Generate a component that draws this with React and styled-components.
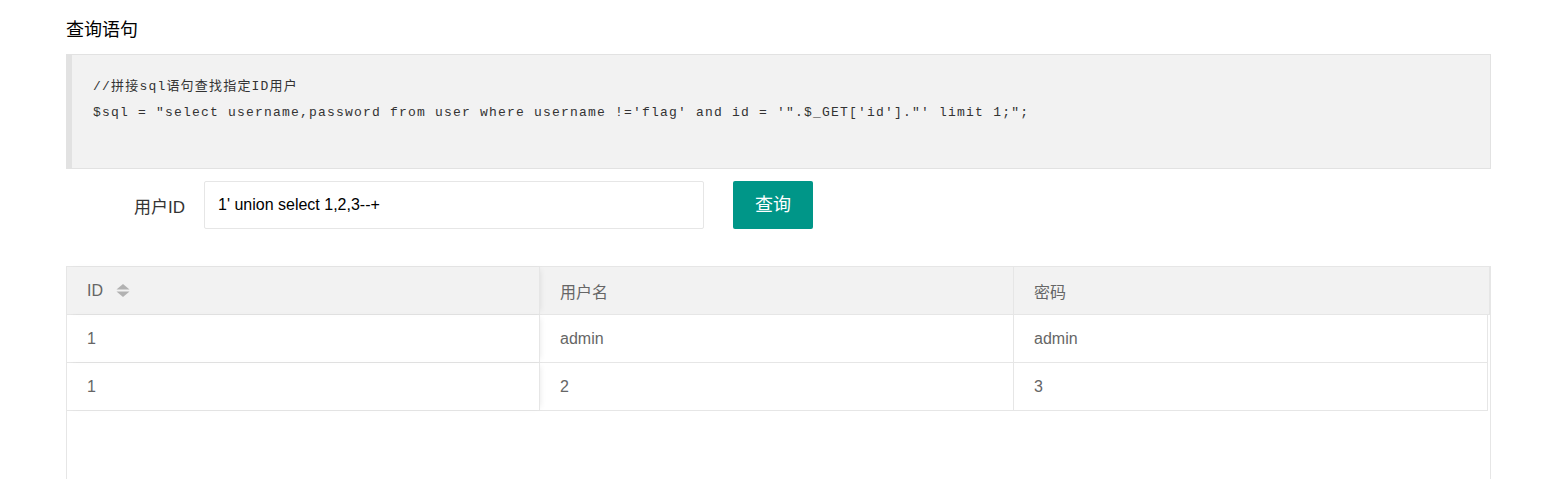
import React from 'react'
import styled, { createGlobalStyle } from 'styled-components'

const GlobalStyle = createGlobalStyle`
  body {
    margin: 0;
    background: #fff;
    font-family: "Liberation Sans", "Noto Sans CJK SC", sans-serif;
    color: #333;
  }
`

const Page = styled.div`
  padding: 18px 68px 0 66px;
`

const Title = styled.h3`
  margin: 0;
  font-size: 18px;
  font-weight: normal;
  line-height: 24px;
  color: #000;
`

const Code = styled.pre`
  margin: 12px 0 0;
  padding: 19px 20px 42px 21px;
  background-color: #f2f2f2;
  border: 1px solid #e2e2e2;
  border-left-width: 6px;
  font-family: "Liberation Mono", "Noto Sans CJK SC", monospace;
  font-size: 13px;
  letter-spacing: 1.2px;
  line-height: 26px;
  color: #333;
  white-space: pre;
`

const FormRow = styled.form`
  display: flex;
  align-items: center;
  margin-top: 12px;
  height: 48px;
`

const Label = styled.label`
  width: 138px;
  box-sizing: border-box;
  padding-right: 19px;
  text-align: right;
  font-size: 17px;
  color: #333;
`

const Input = styled.input`
  width: 500px;
  height: 48px;
  box-sizing: border-box;
  padding: 0 13px;
  border: 1px solid #e6e6e6;
  border-radius: 2px;
  font-family: inherit;
  font-size: 16px;
  color: #000;
  outline: none;
`

const Button = styled.button`
  margin-left: 29px;
  width: 80px;
  height: 48px;
  padding: 0 0 5px;
  border: none;
  border-radius: 2px;
  background-color: #009688;
  color: #fff;
  font-family: inherit;
  font-size: 18px;
  cursor: pointer;
`

const Table = styled.div`
  margin-top: 37px;
  height: 213px;
  border: 1px solid #e6e6e6;
  border-bottom: none;
`

const Row = styled.div`
  display: grid;
  grid-template-columns: 473px 474px 1fr;
  height: 48px;
  box-sizing: border-box;
  border-bottom: 1px solid #e6e6e6;
  background: ${p => (p.$head ? '#f2f2f2' : '#fff')};
  margin-right: ${p => (p.$head ? '0' : '2px')};
`

const Cell = styled.div`
  display: flex;
  align-items: center;
  gap: 13px;
  padding-left: 20px;
  border-right: 1px solid #e6e6e6;
  font-size: 16px;
  color: #666;
  position: relative;

  &:first-child {
    box-shadow: 3px 0 6px -3px rgba(0, 0, 0, 0.1);
    z-index: 1;
  }
`

const SortIcon = () => (
  <svg width="14" height="14" viewBox="0 0 14 14">
    <polygon points="7,0 13.5,5.5 0.5,5.5" fill="#b2b2b2" />
    <polygon points="0.5,7.5 13.5,7.5 7,13" fill="#b2b2b2" />
  </svg>
)

const rows = [
  ['1', 'admin', 'admin'],
  ['1', '2', '3'],
]

export default function App() {
  return (
    <Page>
      <GlobalStyle />
      <Title>查询语句</Title>
      <Code>{`//拼接sql语句查找指定ID用户
$sql = "select username,password from user where username !='flag' and id = '".$_GET['id']."' limit 1;";`}</Code>

      <FormRow onSubmit={e => e.preventDefault()}>
        <Label>用户ID</Label>
        <Input defaultValue="1' union select 1,2,3--+" />
        <Button type="submit">查询</Button>
      </FormRow>

      <Table>
        <Row $head>
          <Cell>ID <SortIcon /></Cell>
          <Cell>用户名</Cell>
          <Cell>密码</Cell>
        </Row>
        {rows.map((r, i) => (
          <Row key={i}>
            {r.map((c, j) => <Cell key={j}>{c}</Cell>)}
          </Row>
        ))}
      </Table>
    </Page>
  )
}
